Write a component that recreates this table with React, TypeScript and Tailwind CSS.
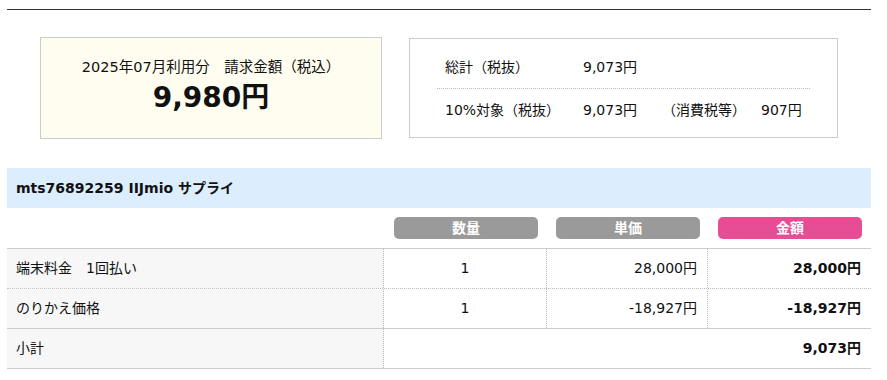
const font = { fontFamily: '"DejaVu Sans", "Noto Sans CJK JP", sans-serif' };

const rows = [
    { label: '端末料金\u30001回払い', qty: '1', unit: '28,000円', amount: '28,000円' },
    { label: 'のりかえ価格', qty: '1', unit: '-18,927円', amount: '-18,927円' },
];

export default function App() {
    return (
        <div className="h-[380px] w-[887px] bg-white pt-[9px] text-[#111]" style={font}>
            <div className="ml-[7px] h-px w-[864px] bg-[#333]" />

            <div className="ml-[7px] w-[864px]">
                {/* summary boxes */}
                <div className="mt-[27px] flex items-start justify-between px-[33px]">
                    <div className="h-[102px] w-[342px] border border-[#ccc] bg-[#fffdf0] pt-[19px] text-center">
                        <p className="text-[14.5px] leading-[20px]">2025年07月利用分　請求金額（税込）</p>
                        <p className="mt-[3px] text-[28px] font-bold leading-[36px]">9,980円</p>
                    </div>
                    <div className="mt-px h-[100px] w-[429px] border border-[#ccc] px-[27px] pt-[8px] text-[14px]">
                        <div className="flex h-[42px] items-center border-b border-dotted border-[#bbb] pl-[8px]">
                            <span className="w-[138px]">総計（税抜）</span>
                            <span>9,073円</span>
                        </div>
                        <div className="flex h-[42px] items-center pl-[8px]">
                            <span className="w-[138px]">10%対象（税抜）</span>
                            <span className="w-[79px]">9,073円</span>
                            <span className="w-[99px]">（消費税等）</span>
                            <span>907円</span>
                        </div>
                    </div>
                </div>

                {/* plan header */}
                <div className="mt-[29px] flex h-[40px] items-center bg-[#dcedfd] px-[9px] text-[14px] font-bold">
                    mts76892259 IIJmio サプライ
                </div>

                <div className="grid grid-cols-[377px_163px_161px_163px] py-[9px] text-[14px] font-bold text-white">
                    <div />
                    <div className="pl-[10px] pr-[9px]">
                        <div className="flex h-[22px] items-center justify-center rounded-[5px] bg-[#9a9a9a]">数量</div>
                    </div>
                    <div className="pl-[9px] pr-[8px]">
                        <div className="flex h-[22px] items-center justify-center rounded-[5px] bg-[#9a9a9a]">単価</div>
                    </div>
                    <div className="pl-[10px] pr-[9px]">
                        <div className="flex h-[22px] items-center justify-center rounded-[5px] bg-[#e64d95]">金額</div>
                    </div>
                </div>

                {/* detail rows */}
                <div className="border-t border-[#ccc] text-[14px]">
                    {rows.map((r, i) => (
                        <div
                            key={r.label}
                            className={`grid h-[40px] grid-cols-[377px_163px_161px_163px] ${
                                i === 0 ? 'border-b border-dotted border-[#bbb]' : 'border-b border-[#ccc]'
                            }`}
                        >
                            <div className="flex items-center border-r border-dotted border-[#bbb] bg-[#f7f7f7] pl-[9px]">{r.label}</div>
                            <div className="flex items-center justify-center border-r border-dotted border-[#bbb]">{r.qty}</div>
                            <div className="flex items-center justify-end border-r border-dotted border-[#bbb] pr-[10px]">{r.unit}</div>
                            <div className="flex items-center justify-end pr-[10px] font-bold">{r.amount}</div>
                        </div>
                    ))}
                    <div className="grid h-[40px] grid-cols-[377px_487px] border-b border-[#ccc]">
                        <div className="flex items-center border-r border-dotted border-[#bbb] bg-[#f7f7f7] pl-[9px]">小計</div>
                        <div className="flex items-center justify-end pr-[10px] font-bold">9,073円</div>
                    </div>
                </div>
            </div>
        </div>
    );
}
